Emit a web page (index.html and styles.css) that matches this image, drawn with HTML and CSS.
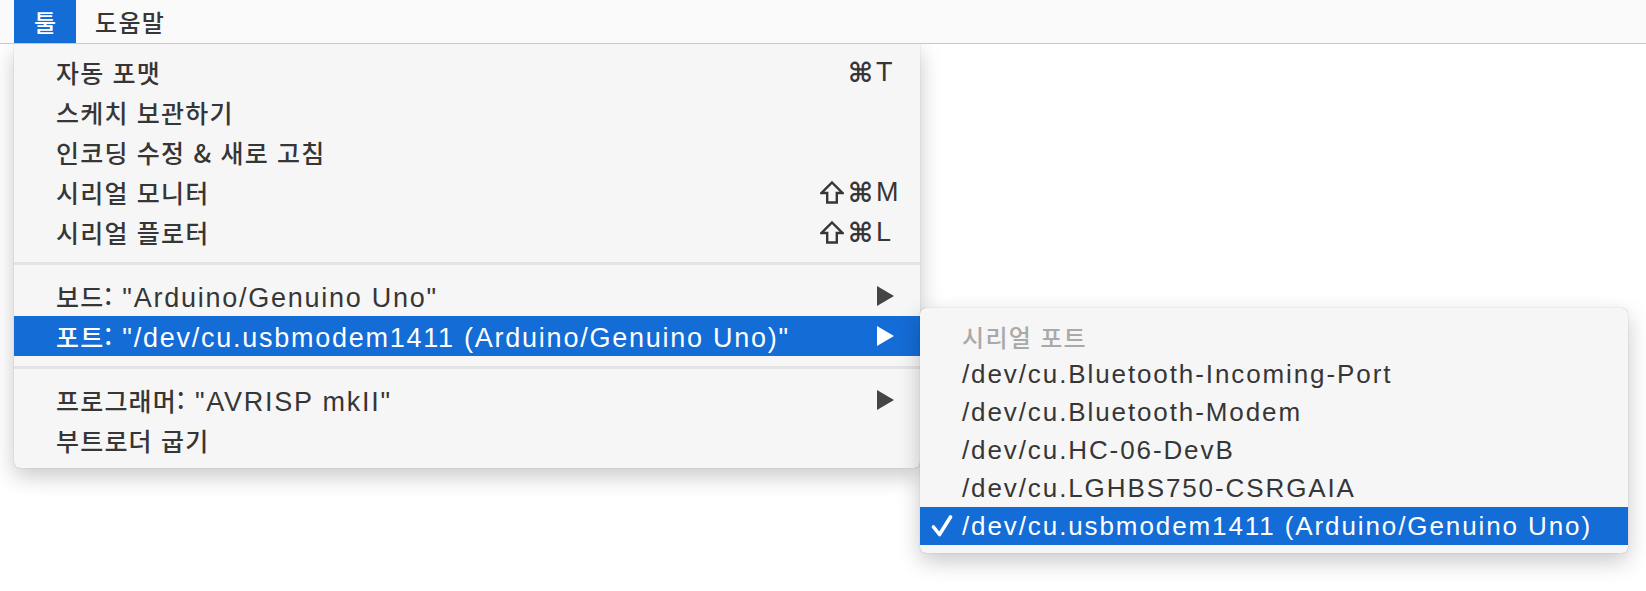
FILE: index.html
```html
<!DOCTYPE html>
<html lang="ko">
<head>
<meta charset="utf-8">
<title>툴 메뉴</title>
<link rel="stylesheet" href="styles.css">
</head>
<body>
<div class="menubar">
  <div class="mb-item active"><span class="ko">툴</span></div>
  <div class="mb-item"><span class="ko">도움말</span></div>
</div>
<div class="stage">
  <div class="menu main">
    <div class="row"><span class="label"><span class="ko">자동 포맷</span></span><span class="mods"><span class="cmd">⌘</span></span><span class="key">T</span></div>
    <div class="row"><span class="label"><span class="ko">스케치 보관하기</span></span></div>
    <div class="row"><span class="label"><span class="ko">인코딩 수정 &amp; 새로 고침</span></span></div>
    <div class="row"><span class="label"><span class="ko">시리얼 모니터</span></span><span class="mods"><svg class="shift" width="24" height="23" viewBox="0 0 24 23"><path d="M12 1.5 L22.5 12 L16.8 12 L16.8 21.5 L7.2 21.5 L7.2 12 L1.5 12 Z"/></svg><span class="cmd">⌘</span></span><span class="key">M</span></div>
    <div class="row"><span class="label"><span class="ko">시리얼 플로터</span></span><span class="mods"><svg class="shift" width="24" height="23" viewBox="0 0 24 23"><path d="M12 1.5 L22.5 12 L16.8 12 L16.8 21.5 L7.2 21.5 L7.2 12 L1.5 12 Z"/></svg><span class="cmd">⌘</span></span><span class="key">L</span></div>
    <div class="sep"></div>
    <div class="row"><span class="label"><span class="ko">보드:</span> "Arduino/Genuino Uno"</span><span class="arrow"><svg width="17" height="20" viewBox="0 0 17 20"><path d="M0 0 L17 10 L0 20 Z"/></svg></span></div>
    <div class="row sel"><span class="label"><span class="ko">포트:</span> "/dev/cu.usbmodem1411 (Arduino/Genuino Uno)"</span><span class="arrow"><svg width="17" height="20" viewBox="0 0 17 20"><path d="M0 0 L17 10 L0 20 Z"/></svg></span></div>
    <div class="sep"></div>
    <div class="row"><span class="label"><span class="ko">프로그래머:</span> "AVRISP mkII"</span><span class="arrow"><svg width="17" height="20" viewBox="0 0 17 20"><path d="M0 0 L17 10 L0 20 Z"/></svg></span></div>
    <div class="row"><span class="label"><span class="ko">부트로더 굽기</span></span></div>
  </div>
  <div class="menu sub">
    <div class="srow header"><span class="ko">시리얼 포트</span></div>
    <div class="srow">/dev/cu.Bluetooth-Incoming-Port</div>
    <div class="srow">/dev/cu.Bluetooth-Modem</div>
    <div class="srow">/dev/cu.HC-06-DevB</div>
    <div class="srow">/dev/cu.LGHBS750-CSRGAIA</div>
    <div class="srow sel"><svg class="check" width="22" height="24" viewBox="0 0 22 24"><path d="M2.5 13 L8.5 20.5 L19.5 3"/></svg>/dev/cu.usbmodem1411 (Arduino/Genuino Uno)</div>
  </div>
</div>
</body>
</html>
```
FILE: styles.css
```css
html, body {
  margin: 0;
  padding: 0;
  background: #ffffff;
}
body {
  width: 1646px;
  height: 591px;
  overflow: hidden;
  font-family: "Liberation Sans", "Noto Sans CJK KR", sans-serif;
  font-size: 26px;
  letter-spacing: 1.9px;
  color: #363636;
}
.ko {
  font-family: "Noto Sans CJK KR", "Liberation Sans", sans-serif;
  font-size: 24px;
  font-weight: 500;
  letter-spacing: 1.3px;
}
.menubar {
  height: 43px;
  background: #fafafa;
  border-bottom: 1px solid #c8c8c8;
  display: flex;
  padding-left: 14px;
  position: relative;
  z-index: 3;
}
.mb-item {
  display: flex;
  align-items: center;
  height: 43px;
  padding: 0 19px 0 19px;
  color: #363636;
}
.mb-item.active {
  background: #146cd6;
  color: #ffffff;
  width: 62px;
  box-sizing: border-box;
  justify-content: center;
  padding: 0;
}
.mb-item.active .ko {
  letter-spacing: 0;
}
.stage {
  display: flex;
  align-items: flex-start;
  padding-left: 14px;
}
.menu {
  background: #f6f6f6;
  box-sizing: border-box;
}
.main {
  width: 906px;
  padding: 8px 0;
  border-radius: 0 0 6px 6px;
  box-shadow: 0 8px 22px rgba(0,0,0,0.22), 0 0 1px rgba(0,0,0,0.35);
  position: relative;
  z-index: 1;
  font-size: 27px;
  letter-spacing: 1.75px;
}
.main .ko {
  font-size: 25px;
  letter-spacing: 1.2px;
}
.row {
  height: 40px;
  display: flex;
  align-items: center;
  padding: 0 21px 0 42px;
  white-space: nowrap;
}
.row .label {
  flex: 1;
}
.mods {
  width: 60px;
  display: flex;
  justify-content: flex-end;
  align-items: center;
  gap: 4px;
  padding-right: 3px;
  box-sizing: border-box;
}
.cmd {
  font-family: "DejaVu Sans", sans-serif;
  font-weight: bold;
  font-size: 27px;
  letter-spacing: 0;
  line-height: 1;
}
.shift path {
  fill: none;
  stroke: #363636;
  stroke-width: 2.4;
  stroke-linejoin: miter;
}
.key {
  width: 23px;
  letter-spacing: 0;
}
.arrow {
  width: 22px;
  display: flex;
  align-items: center;
}
.arrow svg path {
  fill: #444444;
}
.row.sel {
  background: #146cd6;
  color: #ffffff;
}
.row.sel .arrow svg path {
  fill: #ffffff;
}
.sep {
  height: 3px;
  margin: 10px 0 11px;
  background: #e3e3e3;
}
.sub {
  width: 708px;
  margin-top: 264px;
  padding: 9px 0 8px;
  border-radius: 6px;
  box-shadow: 0 8px 22px rgba(0,0,0,0.22), 0 0 1px rgba(0,0,0,0.35);
  position: relative;
  z-index: 2;
}
.srow {
  height: 38px;
  display: flex;
  align-items: center;
  padding-left: 42px;
  white-space: nowrap;
  position: relative;
}
.srow.header {
  color: #a9a9a9;
}
.srow.sel {
  background: #146cd6;
  color: #ffffff;
}
.check {
  position: absolute;
  left: 11px;
  top: 7px;
}
.check path {
  fill: none;
  stroke: #ffffff;
  stroke-width: 3.6;
  stroke-linecap: round;
  stroke-linejoin: round;
}
```
